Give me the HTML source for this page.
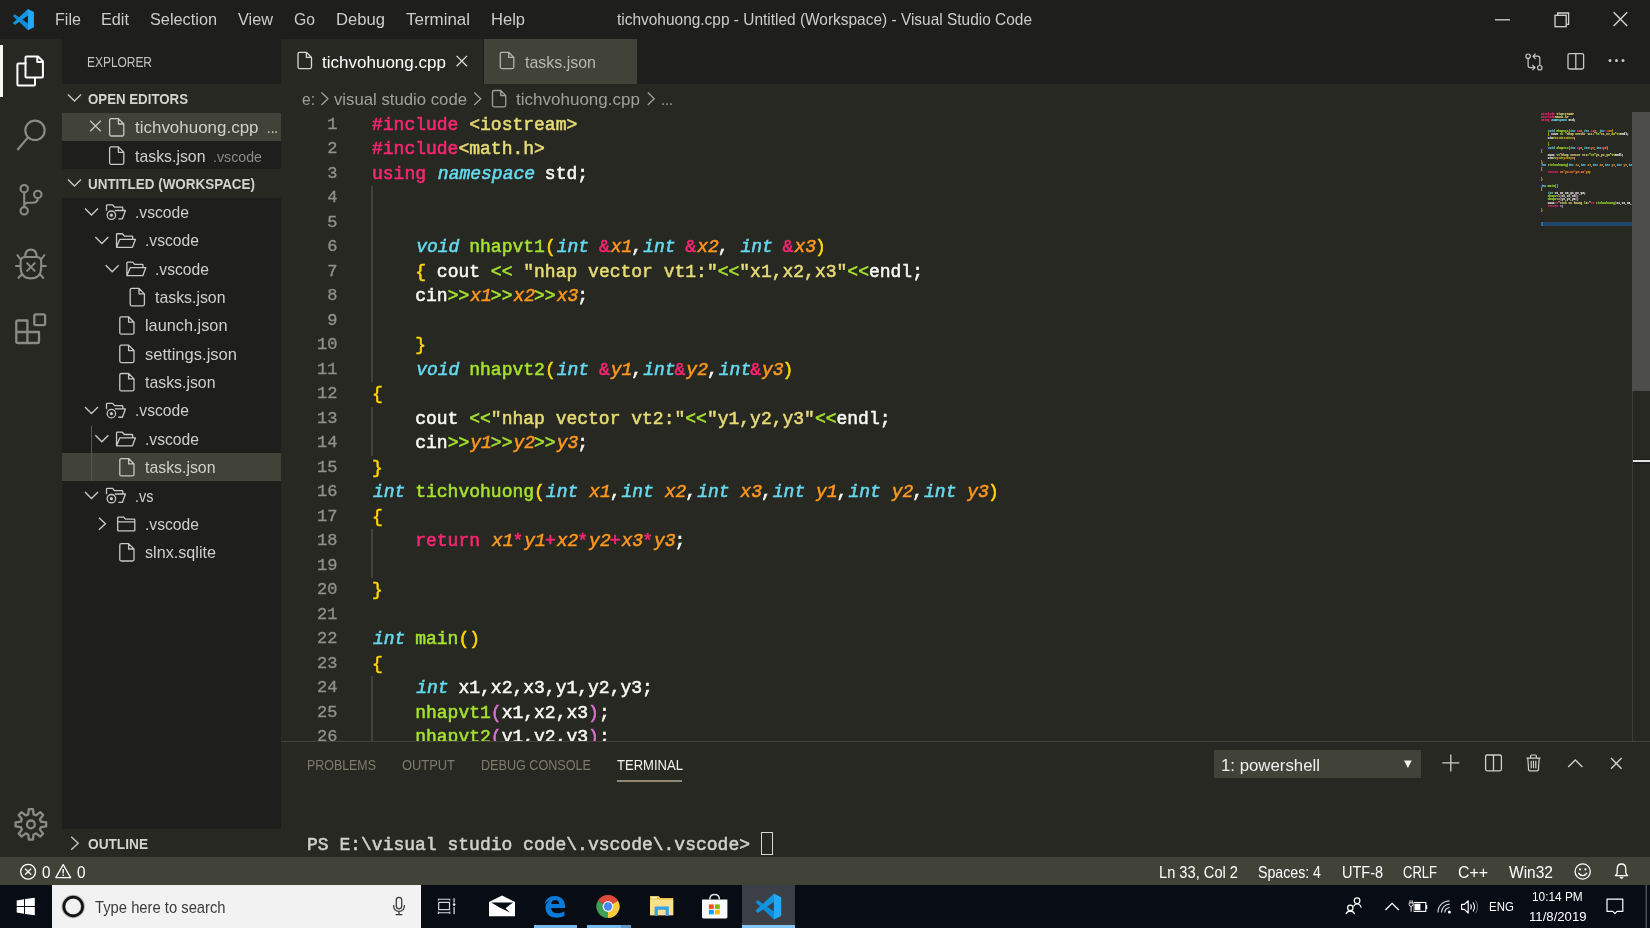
<!DOCTYPE html>
<html><head><meta charset="utf-8"><title>VS Code</title>
<style>
*{margin:0;padding:0;box-sizing:border-box}
html,body{width:1650px;height:928px;overflow:hidden;background:#272822;font-family:"Liberation Sans",sans-serif}
.a{position:absolute}
.t{position:absolute;white-space:pre;line-height:1.15;transform-origin:0 50%;font-family:"Liberation Sans",sans-serif}
svg{position:absolute;overflow:visible}
.code{will-change:transform;position:absolute;left:371px;top:112.5px;font-family:"Liberation Mono",monospace;font-size:18px;font-weight:normal;-webkit-text-stroke:0.55px currentColor;color:#f8f8f2;white-space:normal;line-height:24.49px}
.code div{height:24.49px;white-space:pre}
.ln{-webkit-text-stroke:0.35px currentColor;will-change:transform;position:absolute;left:290px;width:47.5px;top:112.5px;font-family:"Liberation Mono",monospace;font-size:17px;color:#90908a;text-align:right;line-height:24.49px}
.ln div{height:24.49px}
.k{color:#f92672}.s{color:#e6db74}.c{color:#66d9ef;font-style:italic;position:relative;left:1px}.f{color:#a6e22e}.p{color:#fd971f;font-style:italic;position:relative;left:1px}.g{color:#ffd700}.o{color:#da70d6}
.mm{line-height:18.05px}.code.mm div{height:18.05px}

</style></head>
<body>
<!-- background regions -->
<div class="a" style="left:0;top:0;width:1650px;height:39px;background:#1e1f1c"></div>
<div class="a" style="left:0;top:39px;width:62px;height:818px;background:#272822"></div>
<div class="a" style="left:0;top:45px;width:2.5px;height:52px;background:#f8f8f2"></div>
<div class="a" style="left:62px;top:39px;width:219px;height:790px;background:#1e1f1c"></div>
<div class="a" style="left:62px;top:84px;width:219px;height:29px;background:#272822"></div>
<div class="a" style="left:62px;top:113px;width:219px;height:28px;background:#414339"></div>
<div class="a" style="left:62px;top:169px;width:219px;height:28.5px;background:#272822"></div>
<div class="a" style="left:62px;top:453px;width:219px;height:28.3px;background:#414339"></div>
<div class="a" style="left:62px;top:829px;width:219px;height:28px;background:#272822"></div>
<!-- tabs -->
<div class="a" style="left:281px;top:39px;width:1369px;height:44.8px;background:#1e1f1c"></div>
<div class="a" style="left:281px;top:39px;width:201.8px;height:44.8px;background:#272822"></div>
<div class="a" style="left:484px;top:39px;width:153px;height:44.8px;background:#414339"></div>
<!-- editor scrollbar -->
<div class="a" style="left:1632px;top:112.3px;width:18px;height:278.8px;background:#4d4e49"></div>
<div class="a" style="left:1632px;top:391px;width:1px;height:350px;background:#3c3d37"></div>
<div class="a" style="left:1633px;top:458.6px;width:17px;height:5px;background:#1e1f1c"></div><div class="a" style="left:1633px;top:459.6px;width:17px;height:2.9px;background:#e0e0dc"></div>
<!-- panel -->
<div class="a" style="left:281px;top:740.5px;width:1369px;height:1.5px;background:#414339"></div>
<div class="a" style="left:617.3px;top:780.2px;width:65px;height:1.4px;background:#8f8875"></div>
<div class="a" style="left:1214px;top:750.1px;width:206.7px;height:27.8px;background:#414339"></div>
<div class="a" style="left:761px;top:832px;width:12px;height:23px;border:1.2px solid #d8d8d2"></div>
<!-- status bar -->
<div class="a" style="left:0;top:857.3px;width:1650px;height:27.7px;background:#414339"></div>
<!-- taskbar -->
<div class="a" style="left:0;top:885px;width:1650px;height:43px;background:#080c15"></div>
<div class="a" style="left:52px;top:885px;width:369px;height:43px;background:#f2f2f2"></div>
<div class="a" style="left:742.4px;top:885px;width:52.8px;height:43px;background:#3c3f46"></div>
<div class="a" style="left:742.4px;top:925px;width:52.8px;height:3px;background:#82c4f5"></div>
<div class="a" style="left:533.8px;top:925.3px;width:43.7px;height:2.7px;background:#76b9ed"></div>
<div class="a" style="left:587.2px;top:925.3px;width:43.5px;height:2.7px;background:#76b9ed"></div><div class="a" style="left:621px;top:925.3px;width:9.7px;height:2.7px;background:#5f95c0"></div>
<!-- indent guides -->
<div class="a" style="left:371.2px;top:186px;width:1.4px;height:196px;background:#42433d"></div>
<div class="a" style="left:371.2px;top:406.5px;width:1.4px;height:49px;background:#42433d"></div>
<div class="a" style="left:371.2px;top:529px;width:1.4px;height:49px;background:#42433d"></div>
<div class="a" style="left:371.2px;top:676px;width:1.4px;height:65px;background:#42433d"></div>
<!-- code -->
<div class="a" style="left:281px;top:112px;width:1351px;height:628.5px;overflow:hidden">
<div class="ln" style="left:9px;top:0.8px"><div>1</div><div>2</div><div>3</div><div>4</div><div>5</div><div>6</div><div>7</div><div>8</div><div>9</div><div>10</div><div>11</div><div>12</div><div>13</div><div>14</div><div>15</div><div>16</div><div>17</div><div>18</div><div>19</div><div>20</div><div>21</div><div>22</div><div>23</div><div>24</div><div>25</div><div>26</div></div>
<div class="code" style="left:91px;top:0.7px"><div><span class="k">#include</span> <span class="s">&lt;iostream&gt;</span></div>
<div><span class="k">#include</span><span class="s">&lt;math.h&gt;</span></div>
<div><span class="k">using</span> <span class="c">namespace</span> std;</div>
<div></div>
<div></div>
<div>    <span class="c">void</span> <span class="f">nhapvt1</span><span class="g">(</span><span class="c">int</span> <span class="k">&amp;</span><span class="p">x1</span>,<span class="c">int</span> <span class="k">&amp;</span><span class="p">x2</span>, <span class="c">int</span> <span class="k">&amp;</span><span class="p">x3</span><span class="g">)</span></div>
<div>    <span class="g">{</span> cout <span class="f">&lt;&lt;</span> <span class="s">"nhap vector vt1:"</span><span class="f">&lt;&lt;</span><span class="s">"x1,x2,x3"</span><span class="f">&lt;&lt;</span>endl;</div>
<div>    cin<span class="f">&gt;&gt;</span><span class="p">x1</span><span class="f">&gt;&gt;</span><span class="p">x2</span><span class="f">&gt;&gt;</span><span class="p">x3</span>;</div>
<div></div>
<div>    <span class="g">}</span></div>
<div>    <span class="c">void</span> <span class="f">nhapvt2</span><span class="g">(</span><span class="c">int</span> <span class="k">&amp;</span><span class="p">y1</span>,<span class="c">int</span><span class="k">&amp;</span><span class="p">y2</span>,<span class="c">int</span><span class="k">&amp;</span><span class="p">y3</span><span class="g">)</span></div>
<div><span class="g">{</span></div>
<div>    cout <span class="f">&lt;&lt;</span><span class="s">"nhap vector vt2:"</span><span class="f">&lt;&lt;</span><span class="s">"y1,y2,y3"</span><span class="f">&lt;&lt;</span>endl;</div>
<div>    cin<span class="f">&gt;&gt;</span><span class="p">y1</span><span class="f">&gt;&gt;</span><span class="p">y2</span><span class="f">&gt;&gt;</span><span class="p">y3</span>;</div>
<div><span class="g">}</span></div>
<div><span class="c">int</span> <span class="f">tichvohuong</span><span class="g">(</span><span class="c">int</span> <span class="p">x1</span>,<span class="c">int</span> <span class="p">x2</span>,<span class="c">int</span> <span class="p">x3</span>,<span class="c">int</span> <span class="p">y1</span>,<span class="c">int</span> <span class="p">y2</span>,<span class="c">int</span> <span class="p">y3</span><span class="g">)</span></div>
<div><span class="g">{</span></div>
<div>    <span class="k">return</span> <span class="p">x1</span><span class="k">*</span><span class="p">y1</span><span class="k">+</span><span class="p">x2</span><span class="k">*</span><span class="p">y2</span><span class="k">+</span><span class="p">x3</span><span class="k">*</span><span class="p">y3</span>;</div>
<div></div>
<div><span class="g">}</span></div>
<div></div>
<div><span class="c">int</span> <span class="f">main</span><span class="g">()</span></div>
<div><span class="g">{</span></div>
<div>    <span class="c">int</span> x1,x2,x3,y1,y2,y3;</div>
<div>    <span class="f">nhapvt1</span><span class="o">(</span>x1,x2,x3<span class="o">)</span>;</div>
<div>    <span class="f">nhapvt2</span><span class="o">(</span>y1,y2,y3<span class="o">)</span>;</div>
</div>
</div>
<div class="a" style="left:1541px;top:222.2px;width:91px;height:3.5px;background:#22456a"></div><div class="a" style="left:1541px;top:222.2px;width:2px;height:3.5px;background:#2c6cb0"></div>
<div class="a" style="left:1540px;top:112px;width:92px;height:120px;overflow:hidden"><div class="code mm" style="left:1px;top:-0.5px;transform-origin:0 0;transform:scale(0.159,0.19);opacity:0.9;-webkit-text-stroke:1.3px currentColor"><div><span class="k">#include</span> <span class="s">&lt;iostream&gt;</span></div>
<div><span class="k">#include</span><span class="s">&lt;math.h&gt;</span></div>
<div><span class="k">using</span> <span class="c">namespace</span> std;</div>
<div></div>
<div></div>
<div>    <span class="c">void</span> <span class="f">nhapvt1</span><span class="g">(</span><span class="c">int</span> <span class="k">&amp;</span><span class="p">x1</span>,<span class="c">int</span> <span class="k">&amp;</span><span class="p">x2</span>, <span class="c">int</span> <span class="k">&amp;</span><span class="p">x3</span><span class="g">)</span></div>
<div>    <span class="g">{</span> cout <span class="f">&lt;&lt;</span> <span class="s">"nhap vector vt1:"</span><span class="f">&lt;&lt;</span><span class="s">"x1,x2,x3"</span><span class="f">&lt;&lt;</span>endl;</div>
<div>    cin<span class="f">&gt;&gt;</span><span class="p">x1</span><span class="f">&gt;&gt;</span><span class="p">x2</span><span class="f">&gt;&gt;</span><span class="p">x3</span>;</div>
<div></div>
<div>    <span class="g">}</span></div>
<div>    <span class="c">void</span> <span class="f">nhapvt2</span><span class="g">(</span><span class="c">int</span> <span class="k">&amp;</span><span class="p">y1</span>,<span class="c">int</span><span class="k">&amp;</span><span class="p">y2</span>,<span class="c">int</span><span class="k">&amp;</span><span class="p">y3</span><span class="g">)</span></div>
<div><span class="g">{</span></div>
<div>    cout <span class="f">&lt;&lt;</span><span class="s">"nhap vector vt2:"</span><span class="f">&lt;&lt;</span><span class="s">"y1,y2,y3"</span><span class="f">&lt;&lt;</span>endl;</div>
<div>    cin<span class="f">&gt;&gt;</span><span class="p">y1</span><span class="f">&gt;&gt;</span><span class="p">y2</span><span class="f">&gt;&gt;</span><span class="p">y3</span>;</div>
<div><span class="g">}</span></div>
<div><span class="c">int</span> <span class="f">tichvohuong</span><span class="g">(</span><span class="c">int</span> <span class="p">x1</span>,<span class="c">int</span> <span class="p">x2</span>,<span class="c">int</span> <span class="p">x3</span>,<span class="c">int</span> <span class="p">y1</span>,<span class="c">int</span> <span class="p">y2</span>,<span class="c">int</span> <span class="p">y3</span><span class="g">)</span></div>
<div><span class="g">{</span></div>
<div>    <span class="k">return</span> <span class="p">x1</span><span class="k">*</span><span class="p">y1</span><span class="k">+</span><span class="p">x2</span><span class="k">*</span><span class="p">y2</span><span class="k">+</span><span class="p">x3</span><span class="k">*</span><span class="p">y3</span>;</div>
<div></div>
<div><span class="g">}</span></div>
<div></div>
<div><span class="c">int</span> <span class="f">main</span><span class="g">()</span></div>
<div><span class="g">{</span></div>
<div>    <span class="c">int</span> x1,x2,x3,y1,y2,y3;</div>
<div>    <span class="f">nhapvt1</span><span class="o">(</span>x1,x2,x3<span class="o">)</span>;</div>
<div>    <span class="f">nhapvt2</span><span class="o">(</span>y1,y2,y3<span class="o">)</span>;</div>
<div>    cout<span class="k">&lt;&lt;</span><span class="s">"tich vo huong la:"</span><span class="k">&lt;&lt;</span> <span class="f">tichvohuong</span><span class="o">(</span>x1,x2,x3,y1,y2,y3<span class="o">)</span><span class="k">&lt;&lt;</span>endl;</div>
<div>    <span class="k">return</span> <span style="color:#ae81ff">0</span>;</div>
<div><span class="g">}</span></div>
</div></div>
<svg style="left:0;top:0" width="1650" height="928" viewBox="0 0 1650 928">
<polygon points="14.82,14.30 12.91,16.00 27.96,30.20 28.39,23.84" fill="#0e8ad6"/>
<polygon points="14.82,24.90 12.91,22.99 27.96,9.00 28.39,15.36" fill="#1295de"/>
<polygon points="27.96,9.00 33.90,11.97 33.90,27.23 27.96,30.20" fill="#25a8f3"/>
<path d="M1495,19.8 H1510" stroke="#d4d4d0" stroke-width="1.3"/>
<path d="M1557.6,15 V13 H1568.6 V24.4 H1566.4" fill="none" stroke="#d4d4d0" stroke-width="1.3"/><rect x="1555" y="15.3" width="11.2" height="11.4" fill="none" stroke="#d4d4d0" stroke-width="1.3"/>
<path d="M1613.6000000000001,12.3 L1627.2,25.900000000000002 M1627.2,12.3 L1613.6000000000001,25.900000000000002" fill="none" stroke="#d4d4d0" stroke-width="1.4"/>
<circle cx="1528.1" cy="56.2" r="2.2" fill="none" stroke="#c8c8c4" stroke-width="1.2"/><circle cx="1539.8" cy="67.7" r="2.2" fill="none" stroke="#c8c8c4" stroke-width="1.2"/>
<path d="M1528.1,58.6 V65.5 Q1528.1,67.6 1530.2,67.6 H1534.8 M1532.4,65 L1535,67.6 L1532.4,70.2 M1539.8,65.3 V58.3 Q1539.8,56.2 1537.7,56.2 H1533.2 M1535.6,53.6 L1533,56.2 L1535.6,58.8" fill="none" stroke="#c8c8c4" stroke-width="1.2"/>
<rect x="1568" y="53.6" width="15.6" height="15.4" rx="1.5" fill="none" stroke="#c8c8c4" stroke-width="1.3"/><path d="M1575.8,53.6 V69" stroke="#c8c8c4" stroke-width="1.3"/>
<circle cx="1610" cy="60.5" r="1.5" fill="#c8c8c4"/>
<circle cx="1616.5" cy="60.5" r="1.5" fill="#c8c8c4"/>
<circle cx="1623" cy="60.5" r="1.5" fill="#c8c8c4"/>
<path d="M299.5,52.3 H306.37 L311.5,57.43 V67.1 Q311.5,68.6 310.0,68.6 H299.5 Q298,68.6 298,67.1 V53.8 Q298,52.3 299.5,52.3 Z M306.37,52.3 V57.43 H311.5" fill="none" stroke="#d8d8d4" stroke-width="1.3" stroke-linejoin="round"/>
<path d="M456.6,55.9 L467.0,66.3 M467.0,55.9 L456.6,66.3" fill="none" stroke="#e0e0dc" stroke-width="1.3"/>
<path d="M501.8,52.3 H508.66999999999996 L513.8,57.43 V67.1 Q513.8,68.6 512.3,68.6 H501.8 Q500.3,68.6 500.3,67.1 V53.8 Q500.3,52.3 501.8,52.3 Z M508.66999999999996,52.3 V57.43 H513.8" fill="none" stroke="#b4b4ae" stroke-width="1.3" stroke-linejoin="round"/>
<path d="M321.45,92.45 L327.95,98.7 L321.45,104.95" fill="none" stroke="#a0a09a" stroke-width="1.3"/>
<path d="M474.25,92.45 L480.75,98.7 L474.25,104.95" fill="none" stroke="#a0a09a" stroke-width="1.3"/>
<path d="M494.0,90.5 H500.68399999999997 L505.7,95.516 V105.3 Q505.7,106.8 504.2,106.8 H494.0 Q492.5,106.8 492.5,105.3 V92.0 Q492.5,90.5 494.0,90.5 Z M500.68399999999997,90.5 V95.516 H505.7" fill="none" stroke="#a0a09a" stroke-width="1.3" stroke-linejoin="round"/>
<path d="M647.75,92.45 L654.25,98.7 L647.75,104.95" fill="none" stroke="#a0a09a" stroke-width="1.3"/>
<path d="M26.5,63.5 H18.4 Q17.4,63.5 17.4,64.5 V84.6 Q17.4,85.6 18.4,85.6 H34 Q35,85.6 35,84.6 V78" fill="none" stroke="#ffffff" stroke-width="2"/>
<path d="M26.5,56.4 H38 L42.9,61.3 V76.4 Q42.9,77.4 41.9,77.4 H26.5 Q25.5,77.4 25.5,76.4 V57.4 Q25.5,56.4 26.5,56.4 Z M37.3,56.8 V62 H42.5" fill="none" stroke="#ffffff" stroke-width="2" stroke-linejoin="round"/>
<circle cx="35" cy="130.3" r="9.7" fill="none" stroke="#8b8b84" stroke-width="2.2"/><path d="M28,137.4 L17.4,150" stroke="#8b8b84" stroke-width="2.2"/>
<circle cx="24.2" cy="188.7" r="3.7" fill="none" stroke="#8b8b84" stroke-width="2.1"/><circle cx="37.8" cy="194.4" r="3.7" fill="none" stroke="#8b8b84" stroke-width="2.1"/><circle cx="24.2" cy="210.8" r="3.7" fill="none" stroke="#8b8b84" stroke-width="2.1"/><path d="M24.2,192.6 V206.9 M37.8,198.3 Q37.8,202.8 32.5,202.8 H28 Q24.2,202.8 24.2,206.5" fill="none" stroke="#8b8b84" stroke-width="2.1"/>
<path d="M20.6,262 Q20.6,257 25,257 H36.8 Q41.2,257 41.2,262 V267 Q41.2,278.4 30.9,278.4 Q20.6,278.4 20.6,267 Z" fill="none" stroke="#8b8b84" stroke-width="2.1" stroke-linejoin="round"/>
<path d="M25.2,257 Q25.2,249.6 30.9,249.6 Q36.6,249.6 36.6,257" fill="none" stroke="#8b8b84" stroke-width="2.1"/>
<path d="M20.6,259.5 L17,254.5 M41.2,259.5 L44.8,254.5 M20.3,266 H15.2 M41.5,266 H46.6 M22.5,273.5 L18,278.5 M39.3,273.5 L43.8,278.5 M26.6,262.6 L35.2,271.4 M35.2,262.6 L26.6,271.4" fill="none" stroke="#8b8b84" stroke-width="2"/>
<path d="M16.3,332 V322 Q16.3,320.5 17.8,320.5 H27.4 V343 M16.3,332 V341.5 Q16.3,343 17.8,343 H37.5 Q39,343 39,341.5 V332 H16.3" fill="none" stroke="#8b8b84" stroke-width="2.3" stroke-linejoin="round"/>
<rect x="34.3" y="314.3" width="10.8" height="10.8" rx="1.5" fill="none" stroke="#8b8b84" stroke-width="2.3"/>
<path d="M28.85,809.14 L32.95,809.14 L33.57,814.35 L36.12,815.41 L40.24,812.16 L43.14,815.06 L39.89,819.18 L40.95,821.73 L46.16,822.35 L46.16,826.45 L40.95,827.07 L39.89,829.62 L43.14,833.74 L40.24,836.64 L36.12,833.39 L33.57,834.45 L32.95,839.66 L28.85,839.66 L28.23,834.45 L25.68,833.39 L21.56,836.64 L18.66,833.74 L21.91,829.62 L20.85,827.07 L15.64,826.45 L15.64,822.35 L20.85,821.73 L21.91,819.18 L18.66,815.06 L21.56,812.16 L25.68,815.41 L28.23,814.35 Z" fill="none" stroke="#8b8b84" stroke-width="2.3" stroke-linejoin="round"/>
<circle cx="30.9" cy="824.4" r="3.9" fill="none" stroke="#8b8b84" stroke-width="2.3"/>
<path d="M68.0,94.55 L74.5,101.05 L81.0,94.55" fill="none" stroke="#c8c8c4" stroke-width="1.4"/>
<path d="M68.0,179.55 L74.5,186.05 L81.0,179.55" fill="none" stroke="#c8c8c4" stroke-width="1.4"/>
<path d="M71.2,836.7 L78.2,843.2 L71.2,849.7" fill="none" stroke="#c8c8c4" stroke-width="1.4"/>
<path d="M90.2,120.7 L100.8,131.3 M100.8,120.7 L90.2,131.3" fill="none" stroke="#c8c8c4" stroke-width="1.3"/>
<path d="M111.1,118.6 H118.404 L123.8,123.996 V134.5 Q123.8,136.0 122.3,136.0 H111.1 Q109.6,136.0 109.6,134.5 V120.1 Q109.6,118.6 111.1,118.6 Z M118.404,118.6 V123.996 H123.8" fill="none" stroke="#c8c8c4" stroke-width="1.3" stroke-linejoin="round"/>
<path d="M111.1,146.9 H118.404 L123.8,152.296 V162.8 Q123.8,164.3 122.3,164.3 H111.1 Q109.6,164.3 109.6,162.8 V148.4 Q109.6,146.9 111.1,146.9 Z M118.404,146.9 V152.296 H123.8" fill="none" stroke="#c8c8c4" stroke-width="1.3" stroke-linejoin="round"/>
<path d="M85.0,208.55 L91.5,215.05 L98.0,208.55" fill="none" stroke="#c8c8c4" stroke-width="1.4"/>
<path d="M106.5,210.7 V205.7 Q106.5,204.89999999999998 107.3,204.89999999999998 H112.6 L114.6,207.2 H122.0 Q122.8,207.2 122.8,208.0 V210.5 M114.8,210.5 H125.4 L122.4,218.79999999999998 H118.3" fill="none" stroke="#c8c8c4" stroke-width="1.3" stroke-linejoin="round"/>
<circle cx="111.39999999999999" cy="215.2" r="4.2" fill="none" stroke="#c8c8c4" stroke-width="1.3"/><circle cx="111.39999999999999" cy="215.2" r="1.6" fill="#c8c8c4"/>
<path d="M95.35,236.9 L101.85,243.4 L108.35,236.9" fill="none" stroke="#c8c8c4" stroke-width="1.4"/>
<path d="M116.55,247.35 V234.54999999999998 Q116.55,233.74999999999997 117.35,233.74999999999997 H122.35 L124.35,236.04999999999998 H131.85 Q132.65,236.04999999999998 132.65,236.85 V239.35 M116.55,247.35 L119.85,239.35 H135.45 L132.45,247.35 Z" fill="none" stroke="#c8c8c4" stroke-width="1.3" stroke-linejoin="round"/>
<path d="M105.7,265.25 L112.2,271.75 L118.7,265.25" fill="none" stroke="#c8c8c4" stroke-width="1.4"/>
<path d="M126.9,275.7 V262.9 Q126.9,262.09999999999997 127.7,262.09999999999997 H132.7 L134.7,264.4 H142.2 Q143.0,264.4 143.0,265.2 V267.7 M126.9,275.7 L130.2,267.7 H145.8 L142.8,275.7 Z" fill="none" stroke="#c8c8c4" stroke-width="1.3" stroke-linejoin="round"/>
<path d="M131.7,288.45 H139.004 L144.39999999999998,293.846 V304.34999999999997 Q144.39999999999998,305.84999999999997 142.89999999999998,305.84999999999997 H131.7 Q130.2,305.84999999999997 130.2,304.34999999999997 V289.95 Q130.2,288.45 131.7,288.45 Z M139.004,288.45 V293.846 H144.39999999999998" fill="none" stroke="#c8c8c4" stroke-width="1.3" stroke-linejoin="round"/>
<path d="M121.3,316.79999999999995 H128.604 L134.0,322.19599999999997 V332.69999999999993 Q134.0,334.19999999999993 132.5,334.19999999999993 H121.3 Q119.8,334.19999999999993 119.8,332.69999999999993 V318.29999999999995 Q119.8,316.79999999999995 121.3,316.79999999999995 Z M128.604,316.79999999999995 V322.19599999999997 H134.0" fill="none" stroke="#c8c8c4" stroke-width="1.3" stroke-linejoin="round"/>
<path d="M121.3,345.15 H128.604 L134.0,350.546 V361.04999999999995 Q134.0,362.54999999999995 132.5,362.54999999999995 H121.3 Q119.8,362.54999999999995 119.8,361.04999999999995 V346.65 Q119.8,345.15 121.3,345.15 Z M128.604,345.15 V350.546 H134.0" fill="none" stroke="#c8c8c4" stroke-width="1.3" stroke-linejoin="round"/>
<path d="M121.3,373.5 H128.604 L134.0,378.896 V389.4 Q134.0,390.9 132.5,390.9 H121.3 Q119.8,390.9 119.8,389.4 V375.0 Q119.8,373.5 121.3,373.5 Z M128.604,373.5 V378.896 H134.0" fill="none" stroke="#c8c8c4" stroke-width="1.3" stroke-linejoin="round"/>
<path d="M85.0,407.00000000000006 L91.5,413.50000000000006 L98.0,407.00000000000006" fill="none" stroke="#c8c8c4" stroke-width="1.4"/>
<path d="M106.5,409.15000000000003 V404.15000000000003 Q106.5,403.35 107.3,403.35 H112.6 L114.6,405.65000000000003 H122.0 Q122.8,405.65000000000003 122.8,406.45000000000005 V408.95000000000005 M114.8,408.95000000000005 H125.4 L122.4,417.25000000000006 H118.3" fill="none" stroke="#c8c8c4" stroke-width="1.3" stroke-linejoin="round"/>
<circle cx="111.39999999999999" cy="413.65000000000003" r="4.2" fill="none" stroke="#c8c8c4" stroke-width="1.3"/><circle cx="111.39999999999999" cy="413.65000000000003" r="1.6" fill="#c8c8c4"/>
<path d="M95.35,435.35 L101.85,441.85 L108.35,435.35" fill="none" stroke="#c8c8c4" stroke-width="1.4"/>
<path d="M116.55,445.8 V433.0 Q116.55,432.2 117.35,432.2 H122.35 L124.35,434.5 H131.85 Q132.65,434.5 132.65,435.3 V437.8 M116.55,445.8 L119.85,437.8 H135.45 L132.45,445.8 Z" fill="none" stroke="#c8c8c4" stroke-width="1.3" stroke-linejoin="round"/>
<path d="M121.3,458.54999999999995 H128.604 L134.0,463.94599999999997 V474.44999999999993 Q134.0,475.94999999999993 132.5,475.94999999999993 H121.3 Q119.8,475.94999999999993 119.8,474.44999999999993 V460.04999999999995 Q119.8,458.54999999999995 121.3,458.54999999999995 Z M128.604,458.54999999999995 V463.94599999999997 H134.0" fill="none" stroke="#c8c8c4" stroke-width="1.3" stroke-linejoin="round"/>
<path d="M85.0,492.05 L91.5,498.55 L98.0,492.05" fill="none" stroke="#c8c8c4" stroke-width="1.4"/>
<path d="M106.5,494.2 V489.2 Q106.5,488.4 107.3,488.4 H112.6 L114.6,490.7 H122.0 Q122.8,490.7 122.8,491.5 V494.0 M114.8,494.0 H125.4 L122.4,502.3 H118.3" fill="none" stroke="#c8c8c4" stroke-width="1.3" stroke-linejoin="round"/>
<circle cx="111.39999999999999" cy="498.7" r="4.2" fill="none" stroke="#c8c8c4" stroke-width="1.3"/><circle cx="111.39999999999999" cy="498.7" r="1.6" fill="#c8c8c4"/>
<path d="M98.95,517.65 L105.45,523.65 L98.95,529.65" fill="none" stroke="#c8c8c4" stroke-width="1.4"/>
<path d="M117.7,517.85 Q117.7,517.0500000000001 118.5,517.0500000000001 H123.5 L125.5,519.15 H134 Q134.8,519.15 134.8,519.95 V530.15 Q134.8,530.95 134,530.95 H118.5 Q117.7,530.95 117.7,530.15 Z M117.7,521.95 H134.8" fill="none" stroke="#c8c8c4" stroke-width="1.3" stroke-linejoin="round"/>
<path d="M121.3,543.6 H128.604 L134.0,548.996 V559.5 Q134.0,561.0 132.5,561.0 H121.3 Q119.8,561.0 119.8,559.5 V545.1 Q119.8,543.6 121.3,543.6 Z M128.604,543.6 V548.996 H134.0" fill="none" stroke="#c8c8c4" stroke-width="1.3" stroke-linejoin="round"/>
<path d="M91.5,425.5 V481" stroke="#585852" stroke-width="1"/>
<polygon points="1404,760.4 1411.8,760.4 1407.9,768" fill="#f0f0f0"/>
<path d="M1442.3,762.9 H1459.3 M1450.8,754.4 V771.4" stroke="#d0d0cc" stroke-width="1.3"/>
<rect x="1485.6" y="755" width="15.8" height="15.8" rx="1.5" fill="none" stroke="#d0d0cc" stroke-width="1.3"/><path d="M1493.5,755 V770.8" stroke="#d0d0cc" stroke-width="1.3"/>
<path d="M1526.5,758.2 H1540.5 M1530.6,758 V756 Q1530.6,755 1531.6,755 H1535.4 Q1536.4,755 1536.4,756 V758 M1527.8,758.4 L1528.6,769.6 Q1528.7,770.8 1529.9,770.8 H1537.1 Q1538.3,770.8 1538.4,769.6 L1539.2,758.4 M1531.2,760.8 V768.2 M1533.5,760.8 V768.2 M1535.8,760.8 V768.2" fill="none" stroke="#d0d0cc" stroke-width="1.2"/>
<path d="M1568.2,767 L1575.3,760 L1582.4,767" fill="none" stroke="#d0d0cc" stroke-width="1.4"/>
<path d="M1611.0,758.1 L1621.6,768.6999999999999 M1621.6,758.1 L1611.0,768.6999999999999" fill="none" stroke="#d0d0cc" stroke-width="1.4"/>
<circle cx="28.1" cy="871.7" r="7.4" fill="none" stroke="#ffffff" stroke-width="1.3"/><path d="M25,868.6 L31.2,874.8 M31.2,868.6 L25,874.8" stroke="#ffffff" stroke-width="1.3"/>
<path d="M63.2,864.6 L70.6,877.6 H55.8 Z" fill="none" stroke="#ffffff" stroke-width="1.3" stroke-linejoin="round"/><path d="M63.2,869 V873.6 M63.2,874.6 V876" stroke="#ffffff" stroke-width="1.4"/>
<circle cx="1582.7" cy="871.5" r="7.6" fill="none" stroke="#ffffff" stroke-width="1.3"/><circle cx="1580" cy="869.3" r="1.1" fill="#ffffff"/><circle cx="1585.4" cy="869.3" r="1.1" fill="#ffffff"/><path d="M1578.3,873 Q1582.7,878.4 1587.1,873" fill="none" stroke="#ffffff" stroke-width="1.3"/>
<path d="M1615.4,875.6 H1627.6 Q1625.8,874.4 1625.8,872.6 V869.2 Q1625.8,864 1621.5,864 Q1617.2,864 1617.2,869.2 V872.6 Q1617.2,874.4 1615.4,875.6 Z M1620,877 Q1621.5,879 1623,877" fill="none" stroke="#ffffff" stroke-width="1.3" stroke-linejoin="round"/>
<polygon points="16.7,900.4 24,899.3 24,906 16.7,906" fill="#ffffff"/>
<polygon points="25,899.1 34.8,897.7 34.8,906 25,906" fill="#ffffff"/>
<polygon points="16.7,907 24,907 24,913.7 16.7,912.6" fill="#ffffff"/>
<polygon points="25,907 34.8,907 34.8,915.3 25,913.9" fill="#ffffff"/>
<circle cx="73.2" cy="906.5" r="9.6" fill="none" stroke="#000000" stroke-opacity="0.25" stroke-width="4.4"/>
<circle cx="73.2" cy="906.5" r="9.4" fill="none" stroke="#111111" stroke-width="2.6"/>
<rect x="396.3" y="897.4" width="5.4" height="11.4" rx="2.7" fill="none" stroke="#3c3c3c" stroke-width="1.3"/><path d="M393.6,905 Q393.6,911.4 399,911.4 Q404.4,911.4 404.4,905 M399,911.4 V914.6 M395.6,914.6 H402.4" fill="none" stroke="#3c3c3c" stroke-width="1.3"/>
<rect x="438.7" y="902.4" width="10.8" height="7.2" fill="none" stroke="#d8d8d8" stroke-width="1.2"/><path d="M438.4,900.6 V899.3 H449.8 V900.6 M438.4,911.4 V912.7 H449.8 V911.4 M438.4,913 V914 M449.8,913 V914" stroke="#d8d8d8" stroke-width="1.1" fill="none"/><path d="M454.1,898.2 V902.4 M454.1,907 V914.2" stroke="#e0e0e0" stroke-width="1.2"/><circle cx="454.1" cy="904.6" r="1.3" fill="#f0f0f0"/>
<polygon points="489,902 502.1,895.4 515,902 515,916.2 489,916.2" fill="#ffffff"/>
<path d="M491.2,902.4 H513 L505.6,908.2 L510,912.6 L499.6,907.6 Z" fill="#080c15"/>
<g transform="translate(-1.2,0.1)"><path d="M545.3,905.6 Q546.8,896 556.2,896 Q566.2,896.4 566.4,907.8 H552.2 Q552.6,913 558.8,913.2 Q562.4,913.2 565.6,911.4 V915.8 Q562.2,917.6 557.6,917.6 Q547,917 546.6,907.6 Q546.8,903.2 550.6,900.4 Q546.8,901.6 545.3,905.6 Z M552.4,904 H560.4 Q560.2,900 556.6,900 Q553,900 552.4,904 Z" fill="#0a7ad8" fill-rule="evenodd"/></g>
<path d="M608,906.5 L597.95,900.70 A11.6,11.6 0 0 1 618.05,900.70 Z" fill="#e04a3c"/>
<path d="M608,906.5 L618.05,900.70 A11.6,11.6 0 0 1 608.00,918.10 Z" fill="#f7cb3c"/>
<path d="M608,906.5 L608.00,918.10 A11.6,11.6 0 0 1 597.95,900.70 Z" fill="#3fa055"/>
<circle cx="608" cy="906.5" r="5.4" fill="#f4f4f4"/><circle cx="608" cy="906.5" r="4.2" fill="#4a8af0"/>
<g transform="translate(0,-1)"><path d="M650,897 H658.6 L660.4,899 H673.2 V916.2 H650 Z" fill="#efc44a"/><rect x="650" y="900.6" width="23.2" height="15.6" fill="#fbe08b"/><path d="M654.6,907.4 H668.8 V916.8 H665.6 V910.8 H657.8 V916.8 H654.6 Z" fill="#38a0e6"/><rect x="651.4" y="898" width="5.4" height="1.5" fill="#eef4fa"/></g>
<path d="M709.8,899.6 Q709.8,894.6 714.6,894.6 Q719.4,894.6 719.4,899.6" fill="none" stroke="#e0e0e0" stroke-width="1.5"/>
<path d="M702,899.6 H727.4 V917 Q727.4,918.4 726,918.4 H703.4 Q702,918.4 702,917 Z" fill="#fafafa"/>
<rect x="708.9" y="904.4" width="4.9" height="4.5" fill="#f25022"/><rect x="714.9" y="904.4" width="4.9" height="4.5" fill="#7fba00"/><rect x="708.9" y="909.8" width="4.9" height="4.5" fill="#00a4ef"/><rect x="714.9" y="909.8" width="4.9" height="4.5" fill="#ffb900"/>
<polygon points="757.80,900.10 755.46,902.18 773.92,919.60 774.44,911.80" fill="#0e8ad6"/>
<polygon points="757.80,913.10 755.46,910.76 773.92,893.60 774.44,901.40" fill="#1295de"/>
<polygon points="773.92,893.60 781.20,897.24 781.20,915.96 773.92,919.60" fill="#25a8f3"/>
<circle cx="1357.1" cy="900.7" r="2.8" fill="none" stroke="#ffffff" stroke-width="1.2"/><path d="M1353.6,906.2 Q1354.4,904 1357.1,904 Q1360.2,904 1361.2,907.6" fill="none" stroke="#ffffff" stroke-width="1.2"/><circle cx="1350.3" cy="907.9" r="2.7" fill="none" stroke="#ffffff" stroke-width="1.2"/><path d="M1346,914.2 Q1346.8,911.2 1350.3,911.2 Q1353.8,911.2 1354.6,914.2" fill="none" stroke="#ffffff" stroke-width="1.2"/>
<path d="M1385.4,910 L1392.1,903.3 L1398.8,910" fill="none" stroke="#ffffff" stroke-width="1.3"/>
<rect x="1413.2" y="902.5" width="12.6" height="8.9" fill="none" stroke="#ffffff" stroke-width="1.1"/><rect x="1414.4" y="903.7" width="6" height="6.5" fill="#ffffff"/><path d="M1426.6,905 V909" stroke="#ffffff" stroke-width="1.3"/>
<rect x="1408.6" y="899.4" width="5" height="13" fill="#080c15"/><path d="M1410,900.2 V902.8 M1412.2,900.2 V902.8" stroke="#ffffff" stroke-width="0.9"/><path d="M1409.2,902.8 H1413 V904.6 Q1413,906.4 1411.1,906.4 Q1409.2,906.4 1409.2,904.6 Z" fill="none" stroke="#ffffff" stroke-width="0.9"/><path d="M1411.1,906.4 V911.6" stroke="#ffffff" stroke-width="1"/>
<circle cx="1449.4" cy="912" r="1.5" fill="#ffffff"/><path d="M1444.8,912.4 A4.8,4.8 0 0 1 1449.6,907.6 M1441.4,912.4 A8.2,8.2 0 0 1 1449.6,904.2 M1438,912.4 A11.6,11.6 0 0 1 1449.6,900.8" fill="none" stroke="#d0d2d6" stroke-width="1.2"/>
<path d="M1461.6,904.4 H1464.4 L1468.2,900.8 V913 L1464.4,909.4 H1461.6 Z" fill="none" stroke="#ffffff" stroke-width="1.2" stroke-linejoin="round"/><path d="M1470.6,904.4 Q1472.2,906.9 1470.6,909.4 M1473,902.4 Q1476,906.9 1473,911.4" fill="none" stroke="#ffffff" stroke-width="1.1"/><path d="M1475.6,900.4 Q1479.6,906.9 1475.6,913.4" fill="none" stroke="#6a7080" stroke-width="1"/>
<path d="M1607,899.2 H1622.8 V911.4 H1617 L1614.9,913.6 L1612.8,911.4 H1607 Z" fill="none" stroke="#ffffff" stroke-width="1.2" stroke-linejoin="round"/>
<path d="M1646.2,885 V928" stroke="#6a6e78" stroke-width="1"/>
</svg>

<div id="texts">
<span class="t" style="left:55px;top:10.03px;font-size:17px;color:#cccccc;transform:scaleX(0.9487);">File</span>
<span class="t" style="left:101px;top:10.03px;font-size:17px;color:#cccccc;transform:scaleX(0.9557);">Edit</span>
<span class="t" style="left:150px;top:10.03px;font-size:17px;color:#cccccc;transform:scaleX(0.9580);">Selection</span>
<span class="t" style="left:238px;top:10.03px;font-size:17px;color:#cccccc;transform:scaleX(0.9577);">View</span>
<span class="t" style="left:294px;top:10.03px;font-size:17px;color:#cccccc;transform:scaleX(0.9256);">Go</span>
<span class="t" style="left:336px;top:10.03px;font-size:17px;color:#cccccc;transform:scaleX(0.9779);">Debug</span>
<span class="t" style="left:406px;top:10.03px;font-size:17px;color:#cccccc;transform:scaleX(0.9961);">Terminal</span>
<span class="t" style="left:491px;top:10.03px;font-size:17px;color:#cccccc;transform:scaleX(0.9723);">Help</span>
<span class="t" style="left:617px;top:10.11px;font-size:16.5px;color:#cccccc;transform:scaleX(0.9362);">tichvohuong.cpp - Untitled (Workspace) - Visual Studio Code</span>
<span class="t" style="left:322px;top:52.52px;font-size:17px;color:#ffffff;transform:scaleX(1.0014);">tichvohuong.cpp</span>
<span class="t" style="left:525px;top:52.52px;font-size:17px;color:#b8b8b2;transform:scaleX(0.9392);">tasks.json</span>
<span class="t" style="left:302px;top:90.02px;font-size:17px;color:#a0a09a;transform:scaleX(0.9163);">e:</span>
<span class="t" style="left:334px;top:90.02px;font-size:17px;color:#a0a09a;transform:scaleX(0.9842);">visual studio code</span>
<span class="t" style="left:516px;top:90.02px;font-size:17px;color:#a0a09a;transform:scaleX(1.0014);">tichvohuong.cpp</span>
<span class="t" style="left:661px;top:90.02px;font-size:17px;color:#a0a09a;transform:scaleX(0.8467);">...</span>
<span class="t" style="left:87px;top:53.96px;font-size:14.5px;color:#c4c4be;transform:scaleX(0.8229);">EXPLORER</span>
<span class="t" style="left:88px;top:90.96px;font-size:14.5px;color:#d4d4ce;transform:scaleX(0.9148);font-weight:bold;">OPEN EDITORS</span>
<span class="t" style="left:88px;top:175.96px;font-size:14.5px;color:#d4d4ce;transform:scaleX(0.9269);font-weight:bold;">UNTITLED (WORKSPACE)</span>
<span class="t" style="left:88px;top:835.96px;font-size:14.5px;color:#d4d4ce;transform:scaleX(0.9428);font-weight:bold;">OUTLINE</span>
<span class="t" style="left:134.5px;top:118.02px;font-size:17px;color:#d0d0ca;transform:scaleX(0.9974);">tichvohuong.cpp</span>
<span class="t" style="left:266.5px;top:118.02px;font-size:17px;color:#d0d0ca;transform:scaleX(0.7762);">...</span>
<span class="t" style="left:134.5px;top:146.53px;font-size:17px;color:#d0d0ca;transform:scaleX(0.9326);">tasks.json</span>
<span class="t" style="left:213px;top:148.18px;font-size:15px;color:#8c8c86;transform:scaleX(0.9477);">.vscode</span>
<span class="t" style="left:134.5px;top:203.03px;font-size:17px;color:#d0d0ca;transform:scaleX(0.9216);">.vscode</span>
<span class="t" style="left:144.7px;top:231.38px;font-size:17px;color:#d0d0ca;transform:scaleX(0.9216);">.vscode</span>
<span class="t" style="left:155px;top:259.73px;font-size:17px;color:#d0d0ca;transform:scaleX(0.9216);">.vscode</span>
<span class="t" style="left:155px;top:288.08px;font-size:17px;color:#d0d0ca;transform:scaleX(0.9326);">tasks.json</span>
<span class="t" style="left:144.7px;top:316.43px;font-size:17px;color:#d0d0ca;transform:scaleX(0.9591);">launch.json</span>
<span class="t" style="left:144.7px;top:344.78px;font-size:17px;color:#d0d0ca;transform:scaleX(0.9735);">settings.json</span>
<span class="t" style="left:144.7px;top:373.13px;font-size:17px;color:#d0d0ca;transform:scaleX(0.9326);">tasks.json</span>
<span class="t" style="left:134.5px;top:401.48px;font-size:17px;color:#d0d0ca;transform:scaleX(0.9216);">.vscode</span>
<span class="t" style="left:144.7px;top:429.83px;font-size:17px;color:#d0d0ca;transform:scaleX(0.9216);">.vscode</span>
<span class="t" style="left:144.7px;top:458.18px;font-size:17px;color:#d0d0ca;transform:scaleX(0.9326);">tasks.json</span>
<span class="t" style="left:134.5px;top:486.53px;font-size:17px;color:#d0d0ca;transform:scaleX(0.8512);">.vs</span>
<span class="t" style="left:144.7px;top:514.88px;font-size:17px;color:#d0d0ca;transform:scaleX(0.9216);">.vscode</span>
<span class="t" style="left:144.7px;top:543.23px;font-size:17px;color:#d0d0ca;transform:scaleX(0.9512);">slnx.sqlite</span>
<span class="t" style="left:307px;top:756.96px;font-size:14.5px;color:#7d7b69;transform:scaleX(0.8561);">PROBLEMS</span>
<span class="t" style="left:402px;top:756.96px;font-size:14.5px;color:#7d7b69;transform:scaleX(0.8891);">OUTPUT</span>
<span class="t" style="left:481px;top:756.96px;font-size:14.5px;color:#7d7b69;transform:scaleX(0.8696);">DEBUG CONSOLE</span>
<span class="t" style="left:617px;top:756.96px;font-size:14.5px;color:#f4f4ee;transform:scaleX(0.9001);">TERMINAL</span>
<span class="t" style="left:1221px;top:755.52px;font-size:17px;color:#f0f0f0;transform:scaleX(0.9883);">1: powershell</span>
<span class="t" style="left:307px;top:834.85px;font-size:18px;color:#d0d0ca;transform:scaleX(1.0003);font-family:'Liberation Mono',monospace;-webkit-text-stroke:0.55px currentColor;">PS E:\visual studio code\.vscode\.vscode&gt;</span>
<span class="t" style="left:41.5px;top:863.11px;font-size:16.5px;color:#ffffff;transform:scaleX(0.9252);">0</span>
<span class="t" style="left:76.5px;top:863.11px;font-size:16.5px;color:#ffffff;transform:scaleX(0.9252);">0</span>
<span class="t" style="left:1159px;top:863.11px;font-size:16.5px;color:#ffffff;transform:scaleX(0.8878);">Ln 33, Col 2</span>
<span class="t" style="left:1258px;top:863.11px;font-size:16.5px;color:#ffffff;transform:scaleX(0.8584);">Spaces: 4</span>
<span class="t" style="left:1342px;top:863.11px;font-size:16.5px;color:#ffffff;transform:scaleX(0.8770);">UTF-8</span>
<span class="t" style="left:1403px;top:863.11px;font-size:16.5px;color:#ffffff;transform:scaleX(0.7890);">CRLF</span>
<span class="t" style="left:1458px;top:863.11px;font-size:16.5px;color:#ffffff;transform:scaleX(0.9619);">C++</span>
<span class="t" style="left:1509px;top:863.11px;font-size:16.5px;color:#ffffff;transform:scaleX(0.9405);">Win32</span>
<span class="t" style="left:95.2px;top:898.43px;font-size:16.3px;color:#3a3a3a;transform:scaleX(0.9075);">Type here to search</span>
<span class="t" style="left:1489.4px;top:900.40px;font-size:12.7px;color:#ffffff;transform:scaleX(0.9018);">ENG</span>
<span class="t" style="left:1532px;top:889.60px;font-size:12.7px;color:#ffffff;transform:scaleX(0.9335);">10:14 PM</span>
<span class="t" style="left:1528.8px;top:909.60px;font-size:12.7px;color:#ffffff;transform:scaleX(1.0375);">11/8/2019</span>
</div>
</body></html>
